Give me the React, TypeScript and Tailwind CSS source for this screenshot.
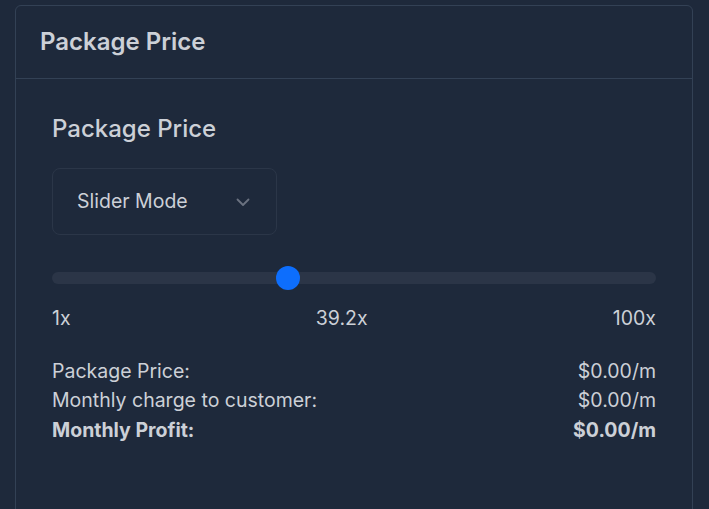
import React from "react";

export default function App() {
  const value = 39.2;
  const pct = (value - 1) / 99;
  return (
    <div className="min-h-screen bg-[#1e293b] pt-[5px] pl-[15px] pr-[16px] font-['Inter',sans-serif] overflow-hidden h-[509px]">
      <div className="border border-[#334155] rounded-md h-[520px]">
        <div className="h-[73px] border-b border-[#334155] flex items-center px-6">
          <h2 className="text-[24px] font-semibold text-[#ccd0d7] leading-7">Package Price</h2>
        </div>
        <div className="px-9 pt-9">
          <h3 className="text-[24px] font-medium text-[#ccd0d7] leading-7">Package Price</h3>
          <div className="mt-[25px] w-[225px] h-[67px] border border-[#2b3648] rounded-lg flex items-center justify-between pl-[24px] pr-[25px]">
            <span className="text-[19.5px] text-[#ccd0d7]">Slider Mode</span>
            <svg width="16" height="16" viewBox="0 0 16 16" fill="none" stroke="#6b7280" strokeWidth="1.8" strokeLinecap="round" strokeLinejoin="round">
              <path d="M2.5 5.5 L8 11 L13.5 5.5" />
            </svg>
          </div>
          <div className="relative mt-[37px] h-[12px] rounded-full bg-[#2b3547]">
            <div
              className="absolute top-1/2 w-[24px] h-[24px] -mt-[12px] rounded-full bg-[#0d6efd]"
              style={{ left: `calc(${pct} * (100% - 24px))` }}
            />
          </div>
          <div className="mt-[20px] flex justify-between text-[19.5px] leading-7 text-[#ccd0d7]">
            <span>1x</span>
            <span>39.2x</span>
            <span>100x</span>
          </div>
          <div className="mt-[25px] text-[19.5px] text-[#ccd0d7] leading-[29.3px]">
            <div className="flex justify-between">
              <span>Package Price:</span>
              <span>$0.00/m</span>
            </div>
            <div className="flex justify-between">
              <span>Monthly charge to customer:</span>
              <span>$0.00/m</span>
            </div>
            <div className="flex justify-between font-bold">
              <span>Monthly Profit:</span>
              <span>$0.00/m</span>
            </div>
          </div>
        </div>
      </div>
    </div>
  );
}
